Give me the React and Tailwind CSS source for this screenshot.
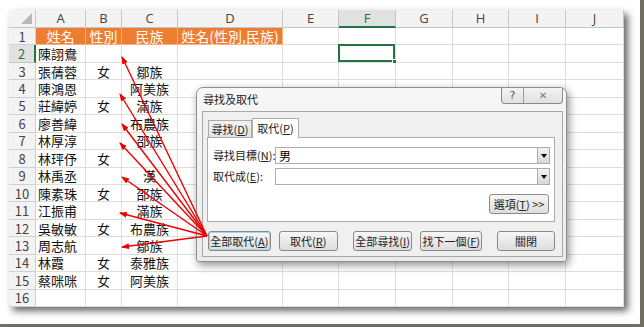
import React from 'react';

const cols = ['A', 'B', 'C', 'D', 'E', 'F', 'G', 'H', 'I', 'J'];

const people = [
    ['陳詡鴦', '', ''],
    ['張蒨蓉', '女', '鄒族'],
    ['陳鴻恩', '', '阿美族'],
    ['莊緯婷', '女', '滿族'],
    ['廖善緯', '', '布農族'],
    ['林厚淳', '', '邵族'],
    ['林玶伃', '女', ''],
    ['林禹丞', '', '漢'],
    ['陳素珠', '女', '邵族'],
    ['江振甫', '', '滿族'],
    ['吳敏敏', '女', '布農族'],
    ['周志航', '', '鄒族'],
    ['林霞', '女', '泰雅族'],
    ['蔡咪咪', '女', '阿美族'],
    ['', '', ''],
];

const headers = ['姓名', '性別', '民族', '姓名(性別,民族)'];

// arrow targets, all drawn from the 全部取代 button
const targets = [[122, 57], [120, 94], [122, 124], [120, 143], [122, 177], [120, 213], [122, 247]];

const cjk = { fontFamily: '"Noto Sans CJK TC", "Noto Sans", sans-serif' };

const Btn = ({ children, className = '' }) => (
    <div className={`h-[20px] flex items-center justify-center rounded-[3px] border border-[#8a8a8a] bg-gradient-to-b from-[#f6f6f6] to-[#dddddd] text-[11px] leading-none text-[#222] whitespace-nowrap ${className}`}>
        {children}
    </div>
);

const DropBtn = () => (
    <div className="w-[12px] h-[15px] border-l border-[#acacac] bg-gradient-to-b from-[#f2f2f2] to-[#d8d8d8] flex items-center justify-center">
        <div className="w-0 h-0 border-l-[3px] border-r-[3px] border-t-[4px] border-l-transparent border-r-transparent border-t-black" />
    </div>
);

const App = () => {
    const rowHeader = (n, active) => (
        <div className={`flex items-center justify-center border-b border-r text-[13px] leading-none ${active ? 'bg-[#e1e1e1] text-[#217346] border-r-2 border-r-[#217346] border-b-[#c6c6c6]' : 'bg-[#f3f3f3] text-[#444] border-[#d0d0d0]'}`}>
            {n}
        </div>
    );

    const cell = 'flex items-center text-[13px] leading-none text-[#111] border-r border-b border-[#dedede] whitespace-nowrap';

    return (
        <div className="w-[644px] h-[327px] bg-white relative overflow-hidden border-r-[4px] border-b-[3px] border-[#6f6f66]" style={cjk}>
            <div className="ml-[9px] mt-[10px] w-[615px] h-[297px] bg-white shadow-[4px_4px_7px_rgba(0,0,0,0.6)] grid grid-cols-[27px_50px_36px_56px_105px_56px_57px_57px_56px_57px_58px] grid-rows-[18px_repeat(16,17.44px)]">
                {/* column header row */}
                <div className="relative bg-[#f3f3f3] border-r border-b border-[#c6c6c6]">
                    <div className="absolute right-[3px] bottom-[3px] w-0 h-0 border-l-[11px] border-l-transparent border-b-[11px] border-b-[#b8b8b8]" />
                </div>
                {cols.map((c) => (
                    <div
                        key={c}
                        className={`flex items-center justify-center text-[13px] leading-none border-r ${c === 'F' ? 'bg-[#e1e1e1] text-[#217346] border-b-2 border-b-[#217346] border-r-[#c6c6c6]' : 'bg-[#f3f3f3] text-[#444] border-b border-[#c6c6c6]'}`}
                        style={{ fontFamily: '"Open Sans", sans-serif' }}
                    >
                        {c}
                    </div>
                ))}

                {/* row 1 */}
                {rowHeader(1, false)}
                {headers.map((h) => (
                    <div key={h} className={`${cell} justify-center bg-[#ed7d31] border-[#f4b183] text-[14px]`}>
                        <span className="text-white">{h}</span>
                    </div>
                ))}
                {cols.slice(4).map((c) => (
                    <div key={c} className="border-r border-b border-[#dedede]" />
                ))}

                {/* data rows */}
                {people.map((p, i) => {
                    const n = i + 2;
                    return (
                        <React.Fragment key={n}>
                            {rowHeader(n, n === 2)}
                            <div className={`${cell} pl-[2px]`}>{p[0]}</div>
                            <div className={`${cell} justify-center`}>{p[1]}</div>
                            <div className={`${cell} justify-center`}>{p[2]}</div>
                            {cols.slice(3).map((c) => (
                                <div key={c} className="relative border-r border-b border-[#dedede]">
                                    {n === 2 && c === 'F' && (
                                        <div className="absolute -left-[1px] -top-[1px] right-0 bottom-0 border-2 border-[#217346]">
                                            <div className="absolute -right-[4px] -bottom-[4px] w-[5px] h-[5px] bg-[#217346] border border-white" />
                                        </div>
                                    )}
                                </div>
                            ))}
                        </React.Fragment>
                    );
                })}
            </div>

            {/* find & replace dialog */}
            <div className="absolute left-[196px] top-[87px] w-[371px] h-[175px] flex flex-col rounded-t-[7px] rounded-b-[3px] border border-[#8e8e8e] bg-gradient-to-b from-[#f7f7f7] to-[#ebebeb] shadow-[2px_3px_8px_rgba(0,0,0,0.45)]">
                <div className="h-[23px] flex items-start justify-between">
                    <div className="pl-[6px] pt-[6px] text-[11px] leading-none text-[#222]">尋找及取代</div>
                    <div className="flex mr-[3px] h-[16px] rounded-b-[4px] border border-t-0 border-[#8a8a8a] bg-gradient-to-b from-[#f4f4f4] to-[#e0e0e0] overflow-hidden">
                        <div className="w-[22px] flex items-center justify-center border-r border-[#9a9a9a] text-[11px] leading-none text-[#555]" style={{ fontFamily: '"DejaVu Sans", sans-serif' }}>?</div>
                        <div className="w-[38px] flex items-center justify-center text-[10px] leading-none text-[#777]" style={{ fontFamily: '"DejaVu Sans", sans-serif' }}>✕</div>
                    </div>
                </div>

                <div className="flex-1 ml-[5px] mr-[3px] mb-[4px] border border-[#a8a8a8] bg-[#f0f0f0] flex flex-col pl-[4px] pr-[7px] pt-[5px]">
                    {/* tabs */}
                    <div className="flex items-end h-[20px] pl-[1px]">
                        <div className="h-[17px] w-[44px] flex items-center justify-center border border-b-0 border-[#acacac] bg-gradient-to-b from-[#f2f2f2] to-[#e3e3e3] text-[11px] leading-none text-[#222]">
                            尋找(<u>D</u>)
                        </div>
                        <div className="relative h-[20px] w-[47px] flex items-center justify-center border border-b-0 border-[#acacac] bg-white text-[11px] leading-none text-[#222] -mb-[1px] z-10">
                            取代(<u>P</u>)
                        </div>
                    </div>
                    <div className="h-[85px] border border-[#acacac] bg-white flex flex-col pl-[5px] pr-[4px] pt-[9px]">
                        <div className="flex items-center h-[17px]">
                            <div className="w-[62px] text-[11px] leading-none text-[#222] whitespace-nowrap">尋找目標(<u>N</u>):</div>
                            <div className="flex-1 h-[17px] border border-[#acacac] flex items-center justify-between pl-[3px] bg-white">
                                <span className="text-[12px] leading-none text-black">男</span>
                                <DropBtn />
                            </div>
                        </div>
                        <div className="flex items-center h-[17px] mt-[4px]">
                            <div className="w-[62px] text-[11px] leading-none text-[#222] whitespace-nowrap">取代成(<u>E</u>):</div>
                            <div className="flex-1 h-[17px] border border-[#acacac] flex items-center justify-end bg-white">
                                <DropBtn />
                            </div>
                        </div>
                        <div className="flex justify-end mt-[9px] pr-[1px]">
                            <Btn className="w-[60px]">選項(<u>T</u>) &gt;&gt;</Btn>
                        </div>
                    </div>
                    {/* bottom buttons */}
                    <div className="flex items-center mt-[9px] pl-[1px]">
                        <Btn className="w-[63px] border-[#3c9fd8] shadow-[inset_0_0_0_1px_#9fd6f3]">全部取代(<u>A</u>)</Btn>
                        <Btn className="w-[59px] ml-[8px]">取代(<u>R</u>)</Btn>
                        <Btn className="w-[60px] ml-[15px]">全部尋找(<u>I</u>)</Btn>
                        <Btn className="w-[62px] ml-[8px]">找下一個(<u>F</u>)</Btn>
                        <Btn className="w-[58px] ml-[15px]">關閉</Btn>
                    </div>
                </div>
            </div>

            {/* red arrows */}
            <svg className="absolute left-0 top-0 pointer-events-none" width="644" height="327">
                <defs>
                    <marker id="head" markerWidth="8" markerHeight="6" refX="7" refY="3" orient="auto" markerUnits="userSpaceOnUse">
                        <path d="M0,0 L8,3 L0,6 Z" fill="#ee0000" />
                    </marker>
                </defs>
                {targets.map(([x, y], i) => (
                    <line key={i} x1="207" y1="236" x2={x} y2={y} stroke="#ee0000" strokeWidth="1.4" markerEnd="url(#head)" />
                ))}
            </svg>
        </div>
    );
};

export default App;
